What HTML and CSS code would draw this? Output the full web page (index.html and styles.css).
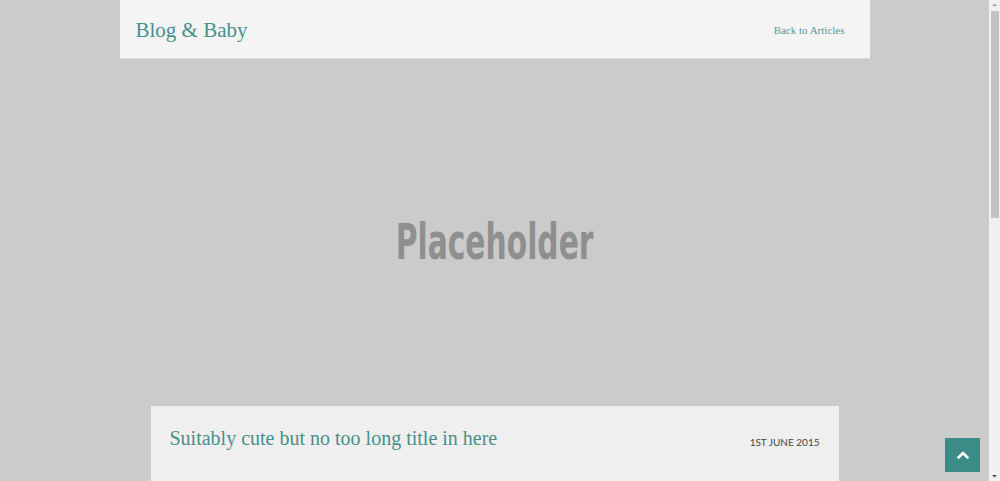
FILE: index.html
```html
<!DOCTYPE html>
<html lang="en">
<head>
<meta charset="utf-8">
<title>Blog &amp; Baby</title>
<link rel="stylesheet" href="styles.css">
</head>
<body>
  <div class="page">
    <header class="site-header">
      <a class="brand" href="#">Blog &amp; Baby</a>
      <a class="back-link" href="#">Back to Articles</a>
    </header>
    <section class="hero">
      <span class="hero-text">Placeholder</span>
    </section>
    <article class="post">
      <div class="post-head">
        <h1 class="post-title">Suitably cute but no too long title in here</h1>
        <span class="post-date">1st June 2015</span>
      </div>
    </article>
  </div>
  <a class="to-top" href="#" aria-label="Back to top">
    <svg width="12" height="8" viewBox="0 0 12 8"><path d="M1.5 6.5 L6 2 L10.5 6.5" fill="none" stroke="#fff" stroke-width="2.6" stroke-linecap="round" stroke-linejoin="round"/></svg>
  </a>
  <div class="scrollbar" aria-hidden="true">
    <svg class="sb-arrow" width="11" height="10" viewBox="0 0 11 10"><path d="M3 6 L5.5 3.5 L8 6 Z" fill="#a3a3a3"/></svg>
    <div class="sb-track"><div class="sb-thumb"></div></div>
    <svg class="sb-arrow" width="11" height="10" viewBox="0 0 11 10"><path d="M3 4 L5.5 6.5 L8 4 Z" fill="#505050"/></svg>
  </div>
</body>
</html>
```

FILE: styles.css
```css
html, body {
  margin: 0;
  padding: 0;
}
body {
  background: #cbcbcb;
  font-family: "Liberation Serif", serif;
  padding-right: 11px;
}
.page {
  width: 750px;
  margin: 0 auto;
  display: flex;
  flex-direction: column;
  align-items: center;
}
.site-header {
  width: 100%;
  box-sizing: border-box;
  height: 59px;
  background: #f4f4f4;
  border-bottom: 1px solid #dcdcdc;
  display: flex;
  align-items: center;
  justify-content: space-between;
  padding: 2px 25px 0 16px;
}
.brand {
  color: #47908b;
  text-decoration: none;
  font-size: 21px;
}
.back-link {
  color: #5a9894;
  text-decoration: none;
  font-size: 11px;
}
.hero {
  width: 100%;
  height: 347px;
  display: flex;
  align-items: center;
  justify-content: center;
  padding-top: 19px;
  box-sizing: border-box;
}
.hero-text {
  font-family: "DejaVu Sans Condensed", "DejaVu Sans", sans-serif;
  font-weight: bold;
  font-size: 49px;
  color: #8f8f8f;
  display: inline-block;
  transform: scaleX(0.675);
}
.post {
  width: 688px;
  height: 665px;
  background: #efefef;
}
.post-head {
  display: flex;
  align-items: baseline;
  justify-content: space-between;
  padding: 21px 19px 0 19px;
}
.post-title {
  margin: 0;
  font-weight: normal;
  font-size: 20px;
  color: #47908b;
}
.post-date {
  font-family: Lato, sans-serif;
  font-size: 10px;
  text-transform: uppercase;
  color: #444;
  position: relative;
  top: 1px;
}
.to-top {
  position: fixed;
  right: 20px;
  bottom: 9px;
  width: 35px;
  height: 34px;
  background: #3b8b86;
  display: flex;
  align-items: center;
  justify-content: center;
}
.scrollbar {
  position: fixed;
  top: 0;
  right: 0;
  bottom: 0;
  width: 11px;
  background: #f0f0f0;
  display: flex;
  flex-direction: column;
}
.sb-arrow {
  flex: none;
  display: block;
}
.sb-track {
  flex: 1;
  padding: 1px 1px 0 2px;
}
.sb-thumb {
  height: 207px;
  background: #c2c2c2;
}
```
